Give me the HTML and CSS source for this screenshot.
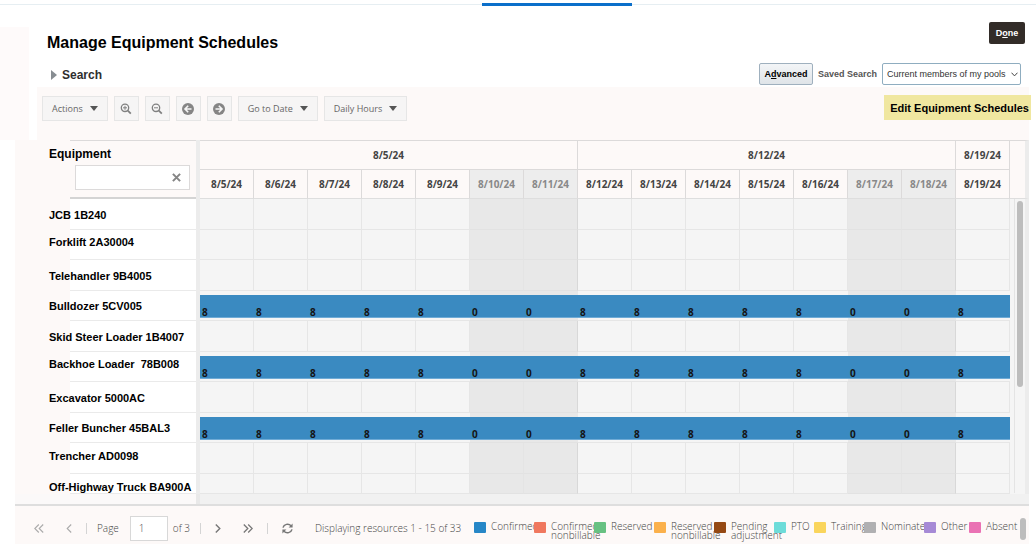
FILE: index.html
```html
<!DOCTYPE html>
<html lang="en">
<head>
<meta charset="utf-8">
<title>Manage Equipment Schedules</title>
<link rel="stylesheet" href="styles.css">
</head>
<body>
<div class="tabstrip"><span class="tab-active"></span></div>
<div class="top">
  <div class="side-strip"></div>
  <header class="head">
    <div class="title-row">
      <h1>Manage Equipment Schedules</h1>
      <button class="done">D<u>o</u>ne</button>
    </div>
    <div class="search-row">
      <button class="search-toggle"><svg width="6" height="10" viewBox="0 0 6 10"><path d="M0 0L6 5L0 10Z" fill="#878d92"/></svg>Search</button>
      <div class="saved">
        <button class="advanced">A<u>d</u>vanced</button>
        <label for="saved">Saved Search</label>
        <div class="select-wrap">
          <select id="saved"><option>Current members of my pools</option></select>
          <svg class="chev" width="7" height="5" viewBox="0 0 7 5"><path d="M.5 .7L3.5 3.9L6.5 .7" fill="none" stroke="#444"/></svg>
        </div>
      </div>
    </div>
    <div class="toolbar">
      <button class="tool">Actions<i class="caret"></i></button>
      <button class="tool icon" aria-label="Zoom in"><svg width="12" height="12" viewBox="0 0 12 12" fill="none" stroke="#808080"><circle cx="5" cy="4.8" r="3.7" stroke-width="1.3"/><path d="M7.8 7.6L10.8 10.6" stroke-width="1.8"/><path d="M3 4.8H7M5 2.8V6.8"/></svg></button>
      <button class="tool icon" aria-label="Zoom out"><svg width="12" height="12" viewBox="0 0 12 12" fill="none" stroke="#808080"><circle cx="5" cy="4.8" r="3.7" stroke-width="1.3"/><path d="M7.8 7.6L10.8 10.6" stroke-width="1.8"/><path d="M3 4.8H7"/></svg></button>
      <button class="tool icon" aria-label="Previous"><svg width="12" height="12" viewBox="0 0 12 12"><circle cx="6" cy="6" r="6" fill="#858585"/><path d="M9.5 6H3.4M6.2 2.8L3 6L6.2 9.2" fill="none" stroke="#f6f6f6" stroke-width="1.6"/></svg></button>
      <button class="tool icon" aria-label="Next"><svg width="12" height="12" viewBox="0 0 12 12"><circle cx="6" cy="6" r="6" fill="#858585"/><path d="M2.5 6H8.6M5.8 2.8L9 6L5.8 9.2" fill="none" stroke="#f6f6f6" stroke-width="1.6"/></svg></button>
      <button class="tool">Go to Date<i class="caret"></i></button>
      <button class="tool">Daily Hours<i class="caret"></i></button>
      <button class="edit">Edit Equipment Schedules</button>
    </div>
  </header>
</div>
<main class="panel">
  <table class="schedule">
    <colgroup><col class="c-name"><col span="15"><col class="c-scroll"></colgroup>
    <thead>
      <tr class="weeks">
        <th rowspan="2" class="name-head"><label for="filter">Equipment</label>
          <div class="filter"><input id="filter" type="text"><button aria-label="Clear"><svg width="9" height="9" viewBox="0 0 8 8"><path d="M.8 .8L7.2 7.2M7.2 .8L.8 7.2" stroke="#858585" stroke-width="1.8"/></svg></button></div></th>
        <th colspan="7">8/5/24</th><th colspan="7">8/12/24</th><th>8/19/24</th><th rowspan="2" class="edge"></th>
      </tr>
      <tr class="days">
        <th>8/5/24</th><th>8/6/24</th><th>8/7/24</th><th>8/8/24</th><th>8/9/24</th><th class="off">8/10/24</th><th class="off">8/11/24</th>
        <th>8/12/24</th><th>8/13/24</th><th>8/14/24</th><th>8/15/24</th><th>8/16/24</th><th class="off">8/17/24</th><th class="off">8/18/24</th><th>8/19/24</th>
      </tr>
    </thead>
    <tbody>
      <tr><th scope="row">JCB 1B240</th><td></td><td></td><td></td><td></td><td></td><td class="off"></td><td class="off wk"></td><td></td><td></td><td></td><td></td><td></td><td class="off"></td><td class="off wk"></td><td></td><td rowspan="10" class="scroll"><div class="track"><div class="thumb"></div></div></td></tr>
      <tr class="raised"><th scope="row">Forklift 2A30004</th><td></td><td></td><td></td><td></td><td></td><td class="off"></td><td class="off wk"></td><td></td><td></td><td></td><td></td><td></td><td class="off"></td><td class="off wk"></td><td></td></tr>
      <tr><th scope="row">Telehandler 9B4005</th><td></td><td></td><td></td><td></td><td></td><td class="off"></td><td class="off wk"></td><td></td><td></td><td></td><td></td><td></td><td class="off"></td><td class="off wk"></td><td></td></tr>
      <tr class="booked"><th scope="row">Bulldozer 5CV005</th><td><b>8</b></td><td><b>8</b></td><td><b>8</b></td><td><b>8</b></td><td><b>8</b></td><td class="off"><b>0</b></td><td class="off"><b>0</b></td><td><b>8</b></td><td><b>8</b></td><td><b>8</b></td><td><b>8</b></td><td><b>8</b></td><td class="off"><b>0</b></td><td class="off"><b>0</b></td><td><b>8</b></td></tr>
      <tr><th scope="row">Skid Steer Loader 1B4007</th><td></td><td></td><td></td><td></td><td></td><td class="off"></td><td class="off wk"></td><td></td><td></td><td></td><td></td><td></td><td class="off"></td><td class="off wk"></td><td></td></tr>
      <tr class="booked raised"><th scope="row">Backhoe Loader&nbsp; 78B008</th><td><b>8</b></td><td><b>8</b></td><td><b>8</b></td><td><b>8</b></td><td><b>8</b></td><td class="off"><b>0</b></td><td class="off"><b>0</b></td><td><b>8</b></td><td><b>8</b></td><td><b>8</b></td><td><b>8</b></td><td><b>8</b></td><td class="off"><b>0</b></td><td class="off"><b>0</b></td><td><b>8</b></td></tr>
      <tr><th scope="row">Excavator 5000AC</th><td></td><td></td><td></td><td></td><td></td><td class="off"></td><td class="off wk"></td><td></td><td></td><td></td><td></td><td></td><td class="off"></td><td class="off wk"></td><td></td></tr>
      <tr class="booked"><th scope="row">Feller Buncher 45BAL3</th><td><b>8</b></td><td><b>8</b></td><td><b>8</b></td><td><b>8</b></td><td><b>8</b></td><td class="off"><b>0</b></td><td class="off"><b>0</b></td><td><b>8</b></td><td><b>8</b></td><td><b>8</b></td><td><b>8</b></td><td><b>8</b></td><td class="off"><b>0</b></td><td class="off"><b>0</b></td><td><b>8</b></td></tr>
      <tr class="raised"><th scope="row">Trencher AD0098</th><td></td><td></td><td></td><td></td><td></td><td class="off"></td><td class="off wk"></td><td></td><td></td><td></td><td></td><td></td><td class="off"></td><td class="off wk"></td><td></td></tr>
      <tr class="last"><th scope="row">Off-Highway Truck BA900A</th><td></td><td></td><td></td><td></td><td></td><td class="off"></td><td class="off wk"></td><td></td><td></td><td></td><td></td><td></td><td class="off"></td><td class="off wk"></td><td></td></tr>
    </tbody>
  </table>
  <div class="base"><div class="base-name"></div><div class="base-grid"></div></div>
  <footer class="footer">
    <nav class="pager">
      <button aria-label="First page" disabled><svg width="10" height="9" viewBox="0 0 10 9"><path d="M4.8 .5L.8 4.5L4.8 8.5M9.2 .5L5.2 4.5L9.2 8.5" fill="none" stroke="#aaa" stroke-width="1.1"/></svg></button>
      <button aria-label="Previous page" disabled><svg width="6" height="9" viewBox="0 0 6 9"><path d="M5.2 .5L1.2 4.5L5.2 8.5" fill="none" stroke="#aaa" stroke-width="1.1"/></svg></button>
      <i class="sep"></i>
      <label for="page">Page</label>
      <input id="page" type="text" value="1">
      <span class="of">of 3</span>
      <i class="sep"></i>
      <button aria-label="Next page"><svg width="6" height="9" viewBox="0 0 6 9"><path d="M.8 .5L4.8 4.5L.8 8.5" fill="none" stroke="#777" stroke-width="1.4"/></svg></button>
      <button aria-label="Last page"><svg width="10" height="9" viewBox="0 0 10 9"><path d="M.8 .5L4.8 4.5L.8 8.5M5.2 .5L9.2 4.5L5.2 8.5" fill="none" stroke="#777" stroke-width="1.3"/></svg></button>
      <i class="sep"></i>
      <button aria-label="Refresh"><svg width="11" height="11" viewBox="0 0 11 11"><path d="M1 4.6A4.6 4.3 0 0 1 9 2.8M10 6.4A4.6 4.3 0 0 1 2 8.2" fill="none" stroke="#777" stroke-width="1.5"/><path d="M10.6 .6V4.6H6.6ZM.4 10.4V6.4H4.4Z" fill="#777"/></svg></button>
      <span class="status">Displaying resources 1 - 15 of 33</span>
    </nav>
    <ul class="legend">
      <li><i class="confirmed"></i>Confirmed</li>
      <li><i class="confirmed-nb"></i>Confirmed<br>nonbillable</li>
      <li><i class="reserved"></i>Reserved</li>
      <li><i class="reserved-nb"></i>Reserved<br>nonbillable</li>
      <li><i class="pending"></i>Pending<br>adjustment</li>
      <li><i class="pto"></i>PTO</li>
      <li><i class="training"></i>Training</li>
      <li><i class="nominated"></i>Nominated</li>
      <li><i class="other"></i>Other</li>
      <li><i class="absent"></i>Absent</li>
    </ul>
    <div class="foot-thumb"></div>
  </footer>
</main>
</body>
</html>
```
FILE: styles.css
```css
* { box-sizing: border-box; }
body { margin: 0; background: #fff; color: #000; font-family: "Liberation Sans", Arial, sans-serif; font-size: 11px; }
button, input, select { font: inherit; color: inherit; margin: 0; padding: 0; border: 0; background: none; }
button { display: flex; align-items: center; justify-content: center; }
svg { display: block; flex: none; }

.tabstrip { height: 6px; padding-top: 4px; background: linear-gradient(#fff 4px, #e6eef2 4px, #e6eef2 5px, #fff 5px); display: flex; justify-content: center; padding-left: 78px; }
.tab-active { width: 150px; height: 3px; margin-top: -1px; background: #0b6fca; }

.top { display: flex; padding-right: 7px; }
.side-strip { width: 29px; margin-top: 21px; margin-right: 8px; background: #fefafa; }
.head { flex: 1; min-width: 0; }
.title-row { display: flex; justify-content: space-between; height: 57px; padding: 16px 4px 0 10px; align-items: flex-start; }
h1 { margin: 11px 0 0; font-size: 16px; line-height: 20px; }
.done { width: 36px; height: 22px; border-radius: 2px; background: #322c28; color: #fff; font-size: 9px; font-weight: bold; }
.search-row { display: flex; justify-content: space-between; height: 24px; padding: 0 8px 0 14px; }
.search-toggle { gap: 5px; height: 24px; font-size: 12px; font-weight: bold; color: #2e2e2e; }
.saved { display: flex; align-items: center; height: 22px; gap: 5px; font-size: 9px; }
.saved label { font-weight: bold; color: #555; }
.advanced { width: 54px; height: 22px; border: 1px solid #9fb0be; border-radius: 2px; background: linear-gradient(#f3f5f7, #dfe4e8); font-weight: bold; }
.select-wrap { display: grid; align-items: center; width: 139px; }
.select-wrap > * { grid-area: 1 / 1; }
.select-wrap select { appearance: none; width: 100%; height: 22px; padding: 0 4px; border: 1px solid #8fadc0; border-radius: 2px; background: #fff; color: #333; }
.chev { justify-self: end; margin-right: 3px; pointer-events: none; }
.toolbar { display: flex; align-items: center; gap: 6px; height: 53px; padding: 0 0 10px 5px; background: #fdf9f8; font-family: "Open Sans", sans-serif; font-size: 9px; color: #666; }
.tool { height: 25px; padding: 0 9px; border: 1px solid #e6e6e6; background: #f6f5f5; }
.tool.icon { width: 25px; padding: 0; }
.caret { margin-left: 7px; border: 4px solid transparent; border-top: 5px solid #555; border-bottom: 0; }
.edit { height: 25px; margin: 0 -2px 2px auto; padding: 0 2px 0 6px; background: #f0e7a0; color: #000; font-family: "Liberation Sans", Arial, sans-serif; font-size: 11px; font-weight: bold; white-space: nowrap; }

.panel { margin: 0 7px 0 15px; }
.schedule { width: 100%; table-layout: fixed; border-collapse: separate; border-spacing: 0; }
.schedule th, .schedule td { padding: 0; }
.c-name { width: 185px; }
.c-scroll { width: 19px; }
thead th { background: #fdf9f8; border-right: 1px solid #dcdada; font-family: "Open Sans", sans-serif; font-size: 10px; line-height: 14px; color: #444; }
.weeks th { height: 30px; border-top: 1px solid #dcdada; border-bottom: 1px solid #dcdada; }
.days th { height: 29px; border-bottom: 1px solid #dedede; }
.days .off { background: #ededed; color: #888; }
.schedule .name-head { padding: 7px 6px 0 34px; border-top: 0; border-bottom: 0; border-right: 4px solid #ececec; background: linear-gradient(90deg, #fdf9f8 55px, transparent 55px), linear-gradient(#dcdada 1px, #fdf9f8 1px, #fdf9f8 calc(100% - 2px), #d4d4d4 calc(100% - 2px)); text-align: left; vertical-align: top; font-family: "Liberation Sans", Arial, sans-serif; font-size: 12px; color: #000; }
.name-head label { display: block; }
.filter { display: flex; align-items: center; height: 25px; margin: 4px 0 0 26px; padding-right: 8px; border: 1px solid #dcdada; background: #fff; }
.filter input { flex: 1; min-width: 0; height: 100%; }
.weeks .edge { border-right: 4px solid #ececec; border-bottom-color: #dedede; }

tbody tr { height: 31px; }
tbody tr:nth-child(even) { height: 30px; }
.schedule tbody th { padding-left: 34px; background: linear-gradient(90deg, #fdf9f8 55px, transparent 55px), linear-gradient(#fff calc(100% - 1px), #eaeaea calc(100% - 1px)); border-right: 4px solid #ececec; text-align: left; font-size: 11px; line-height: 14px; white-space: nowrap; }
.schedule .raised th { padding-bottom: 6px; }
tbody td { background: #f5f5f5; border-right: 1px solid #e6e6e6; border-bottom: 1px solid #e6e6e6; }
tbody .off { background: #e8e8e8; border-right-color: #e4e4e4; border-bottom-color: #e2e2e2; }
tbody .wk { border-right-color: #d8d8d8; }
.schedule .booked td { vertical-align: top; border-right: 0; padding-top: 4px; }
.booked b { display: block; height: 23px; padding: 10px 0 0 2px; background: #3a8ac1; border-bottom: 1px solid #6fabd6; font: bold 10px/14px "Open Sans", sans-serif; color: #151515; }
tbody tr.last { height: 20px; }
.schedule .last th { padding-top: 6px; }
.schedule .scroll { padding-left: 4px; border-right: 4px solid #ececec; border-bottom: 0; vertical-align: top; }
.track { height: 294px; padding: 2px; border-left: 1px solid #e4e4e4; }
.thumb { width: 6px; height: 186px; border-radius: 3px; background: #bdbdbd; }
.base { display: flex; height: 12px; border-bottom: 2px solid #dedede; }
.base-name { width: 181px; background: #fbf9f9; }
.base-grid { flex: 1; background: #f1f1f1; border-left: 4px solid #e9e9e9; }

.footer { display: flex; align-items: flex-start; height: 38px; background: #fdf9f8; font-family: "Open Sans", sans-serif; font-size: 10px; font-weight: 300; color: #444; }
.pager { display: flex; align-items: center; flex: 1; height: 44px; padding-left: 19px; white-space: nowrap; }
.pager button { height: 24px; margin-right: 22px; }
.sep { width: 1px; height: 11px; margin: 0 14px 0 -8px; background: #d4d4d4; }
.sep + label { margin-left: -4px; }
.pager input { width: 38px; height: 25px; margin: 0 5px 0 11px; padding-left: 8px; border: 1px solid #d8d8d8; background: #fff; }
.of { margin-right: 18px; }
.legend { display: grid; grid-template-columns: repeat(5, 60px) 40px 50px 60px 45px 51px; margin: 16px 0 0; padding: 0; list-style: none; line-height: 9px; white-space: nowrap; }
.legend li { display: flex; gap: 5px; }
.legend i { position: relative; flex: none; width: 12px; height: 11px; border-radius: 1px; }
.confirmed { background: #2687c7; }
.confirmed-nb { background: #f0785f; }
.reserved { background: #67c182; }
.reserved-nb { background: #fbb14c; }
.pending { background: #954914; }
.pto { background: #6ddcd9; }
.training { background: #fad55c; }
.nominated { background: #b0b0b2; }
.other { background: #a68ad6; }
.absent { background: #ea72b4; }
.foot-thumb { width: 6px; height: 22px; margin: 12px 3px 0 0; border-radius: 3px; background: #bdbdbd; }
```
